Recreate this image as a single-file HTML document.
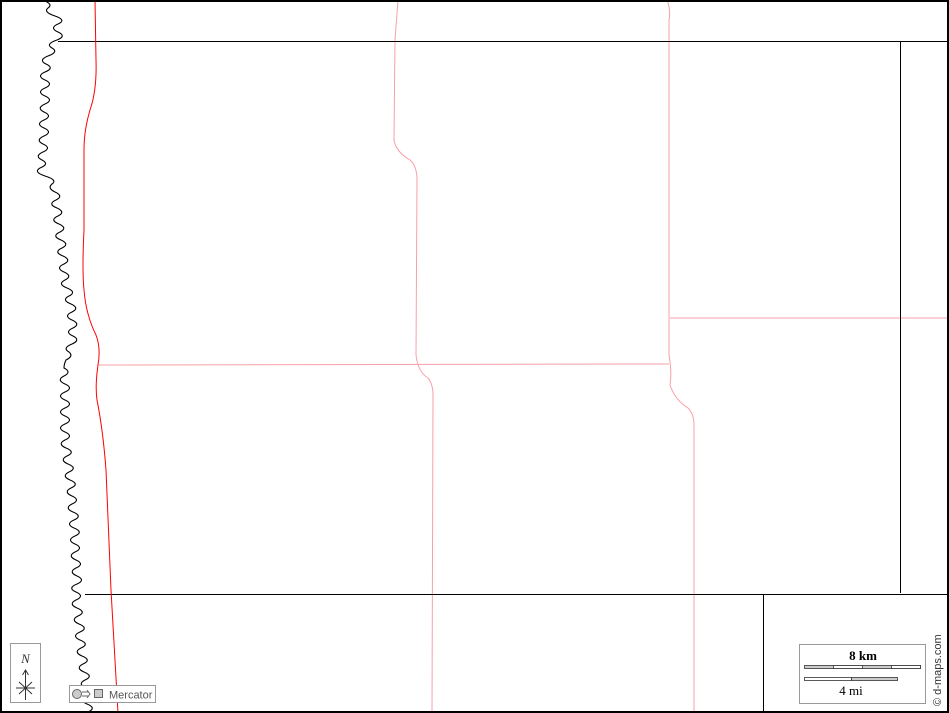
<!DOCTYPE html>
<html><head><meta charset="utf-8"><style>
html,body{margin:0;padding:0;background:#fff;}
svg{display:block;}
</style></head><body>
<svg width="949" height="713" viewBox="0 0 949 713" xmlns="http://www.w3.org/2000/svg">
<rect x="0" y="0" width="949" height="713" fill="#fff"/>
<g fill="none" stroke="#f7a0a8" stroke-width="1">
<path d="M398,0 L395,40 L394,140 Q396,152 410,160 Q417,166 417,180 L416,355 Q418,372 428,378 Q433,384 433,395 L432,713"/>
<path d="M667,0 Q671,10 669,20 L669,355 Q672,372 670,385 Q675,400 688,408 Q694,414 694,425 L694,713"/>
<path d="M99,365 L669,364"/>
<path d="M670,318 L949,318"/>
</g>
<g fill="none" stroke="#000" stroke-width="1">
<path d="M58,41.5 L949,41.5"/>
<path d="M900.5,41 L900.5,593"/>
<path d="M85,594.5 L949,594.5"/>
<path d="M763.5,594 L763.5,713"/>
</g>
<path d="M95,0 L96,60 Q97,90 90,110 Q84,130 84,150 L84,230 Q82,270 84,290 Q86,315 96,335 Q101,348 98,365 Q95,385 97,400 Q103,430 106,470 L111,590 L118,713" fill="none" stroke="#f00" stroke-width="1"/>
<path fill="none" stroke="#000" stroke-width="1.1" d="M42,0 Q54,4 48,8 Q43,12 55,16 Q67,20 58,24 Q49,28 58,32 Q67,36 57,40 Q45,44 52,48 Q59,52 48,56 Q38,60 46,64 Q55,68 45,72 Q36,76 45,80 Q54,84 45,88 Q36,92 45,96 Q54,100 45,104 Q36,108 44,112 Q53,116 44,120 Q35,124 44,128 Q53,132 44,136 Q35,140 43,144 Q52,148 43,152 Q34,156 42,160 Q50,164 40,168 Q33,172 45,176 Q58,180 52,184 Q47,188 55,192 Q64,196 56,200 Q47,204 57,208 Q66,212 58,216 Q49,220 59,224 Q68,228 60,232 Q51,236 61,240 Q70,244 62,248 Q53,252 63,256 Q72,260 64,264 Q55,268 64,272 Q73,276 65,280 Q57,284 67,288 Q77,292 69,296 Q61,300 71,304 Q80,308 72,312 Q63,316 72,320 Q81,324 73,328 Q64,332 73,336 Q81,340 72,344 Q62,348 69,352 Q74,356 66,360 Q64,364 64,368 Q72,372 64,376 Q56,380 65,384 Q74,388 65,392 Q56,396 65,400 Q74,404 65,408 Q56,412 65,416 Q74,420 65,424 Q56,428 65,432 Q74,436 65,440 Q57,444 66,448 Q76,452 67,456 Q59,460 68,464 Q78,468 69,472 Q61,476 70,480 Q80,484 71,488 Q63,492 72,496 Q81,500 72,504 Q64,508 73,512 Q83,516 74,520 Q65,524 74,528 Q84,532 75,536 Q66,540 75,544 Q84,548 75,552 Q67,556 76,560 Q85,564 76,568 Q68,572 77,576 Q86,580 77,584 Q67,588 76,592 Q85,596 76,600 Q68,604 77,608 Q87,612 78,616 Q70,620 79,624 Q89,628 80,632 Q71,636 80,640 Q90,644 81,648 Q73,652 82,656 Q92,660 83,664 Q75,668 84,672 Q94,676 85,680 Q77,684 86,688 Q96,692 87,696 Q78,700 87,704 Q97,708 88,712"/>
<rect x="1" y="1" width="947" height="711" fill="none" stroke="#000" stroke-width="2"/>
<rect x="10.5" y="643.5" width="30" height="59" fill="#fff" stroke="#999"/>
<text x="25.5" y="663" font-family="Liberation Serif, serif" font-style="italic" font-size="13" text-anchor="middle" fill="#333">N</text>
<path d="M25.5,700 L25.5,671 M22.5,675 L25.5,670 L28.5,675 M16,688 L35,688 M19,682 L32,694 M32,682 L19,694" stroke="#333" stroke-width="1" fill="none"/>
<rect x="69.5" y="685.5" width="86" height="17" fill="#fff" stroke="#999"/>
<circle cx="77" cy="694" r="4.5" fill="#ccc" stroke="#666"/>
<path d="M82,692 L89,692 M82,696 L89,696 M87,690 L90,694 L87,698" stroke="#666" fill="none"/>
<rect x="94.5" y="689.5" width="8" height="8" fill="#ccc" stroke="#666"/>
<text x="109" y="698.5" font-family="Liberation Sans, sans-serif" font-size="11" fill="#555">Mercator</text>
<rect x="799.5" y="644.5" width="126" height="59" fill="#fff" stroke="#999"/>
<text x="863" y="660" font-family="Liberation Serif, serif" font-size="13" font-weight="bold" text-anchor="middle" fill="#000">8 km</text>
<rect x="804.5" y="665.5" width="116" height="3" fill="#ccc" stroke="#333" stroke-width="0.8"/>
<rect x="833.5" y="665.5" width="29" height="3" fill="#fff" stroke="#333" stroke-width="0.8"/>
<rect x="891.5" y="665.5" width="29" height="3" fill="#fff" stroke="#333" stroke-width="0.8"/>
<rect x="804.5" y="677.5" width="47" height="3" fill="#fff" stroke="#333" stroke-width="0.8"/>
<rect x="851.5" y="677.5" width="46" height="3" fill="#ccc" stroke="#333" stroke-width="0.8"/>
<text x="851" y="695" font-family="Liberation Serif, serif" font-size="13" text-anchor="middle" fill="#000">4 mi</text>
<text transform="translate(941,706) rotate(-90)" font-family="Liberation Sans, sans-serif" font-size="11" fill="#333">© d-maps.com</text>
</svg>
</body></html>
